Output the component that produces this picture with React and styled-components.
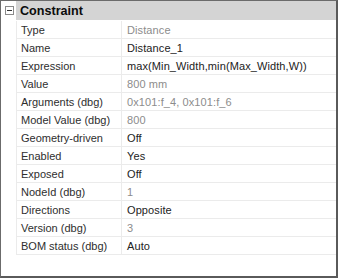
import React from "react";
import styled, { createGlobalStyle } from "styled-components";

const Global = createGlobalStyle`
  html, body { margin: 0; padding: 0; background: #fff; }
  body { font-family: "Liberation Sans", Arial, sans-serif; }
`;

const Panel = styled.div`
  box-sizing: border-box;
  width: 338px;
  height: 278px;
  border-left: 1px solid #6b6b6b;
  border-top: 1px solid #6b6b6b;
  border-right: 2px solid #5a5a5a;
  border-bottom: 2px solid #5a5a5a;
  background: #fff;
  display: flex;
  flex-direction: column;
`;

const Header = styled.div`
  display: flex;
  height: 19px;
  margin-bottom: 1px;
`;

const Gutter = styled.div`
  width: 15px;
  flex: none;
  display: flex;
  align-items: center;
  justify-content: center;
  background: #fff;
`;

const ToggleBox = styled.div`
  box-sizing: border-box;
  width: 9px;
  height: 9px;
  border: 1px solid #8a8a8a;
  background: #fff;
  position: relative;
  margin-left: 1px;
  margin-top: -1px;
  &::after {
    content: "";
    position: absolute;
    left: 1px;
    right: 1px;
    top: 3px;
    height: 1px;
    background: #333;
  }
`;

const HeaderTitle = styled.div`
  flex: 1;
  background: #d4d4d4;
  font-weight: bold;
  font-size: 12.6px;
  color: #0c0c0c;
  display: flex;
  align-items: center;
  padding-left: 4px;
`;

const Grid = styled.div`
  display: grid;
  grid-template-columns: 15px 106px 1fr;
`;

const Cell = styled.div`
  box-sizing: border-box;
  height: 18px;
  border-bottom: 1px solid #ebebeb;
  border-left: ${(p) => (p.$first ? "1px solid #ebebeb" : "0")};
  display: flex;
  align-items: center;
  font-size: 11px;
  white-space: nowrap;
  overflow: hidden;
`;

const GutterCell = styled.div`
  height: 18px;
`;

const Label = styled(Cell)`
  color: #2e2e2e;
  padding-left: 4px;
  border-right: 1px solid #ebebeb;
`;

const Value = styled(Cell)`
  color: ${(p) => (p.$muted ? "#8c8c8c" : "#222")};
  padding-left: 5px;
  letter-spacing: 0.1px;
`;

const rows = [
  ["Type", "Distance", true],
  ["Name", "Distance_1", false],
  ["Expression", "max(Min_Width,min(Max_Width,W))", false],
  ["Value", "800 mm", true],
  ["Arguments (dbg)", "0x101:f_4, 0x101:f_6", true],
  ["Model Value (dbg)", "800", true],
  ["Geometry-driven", "Off", false],
  ["Enabled", "Yes", false],
  ["Exposed", "Off", false],
  ["NodeId (dbg)", "1", true],
  ["Directions", "Opposite", false],
  ["Version (dbg)", "3", true],
  ["BOM status (dbg)", "Auto", false],
];

export default function App() {
  return (
    <>
      <Global />
      <Panel>
        <Header>
          <Gutter>
            <ToggleBox />
          </Gutter>
          <HeaderTitle>Constraint</HeaderTitle>
        </Header>
        <Grid>
          {rows.map(([label, value, muted], i) => (
            <React.Fragment key={i}>
              <GutterCell />
              <Label $first>{label}</Label>
              <Value $muted={muted}>{value}</Value>
            </React.Fragment>
          ))}
        </Grid>
      </Panel>
    </>
  );
}
